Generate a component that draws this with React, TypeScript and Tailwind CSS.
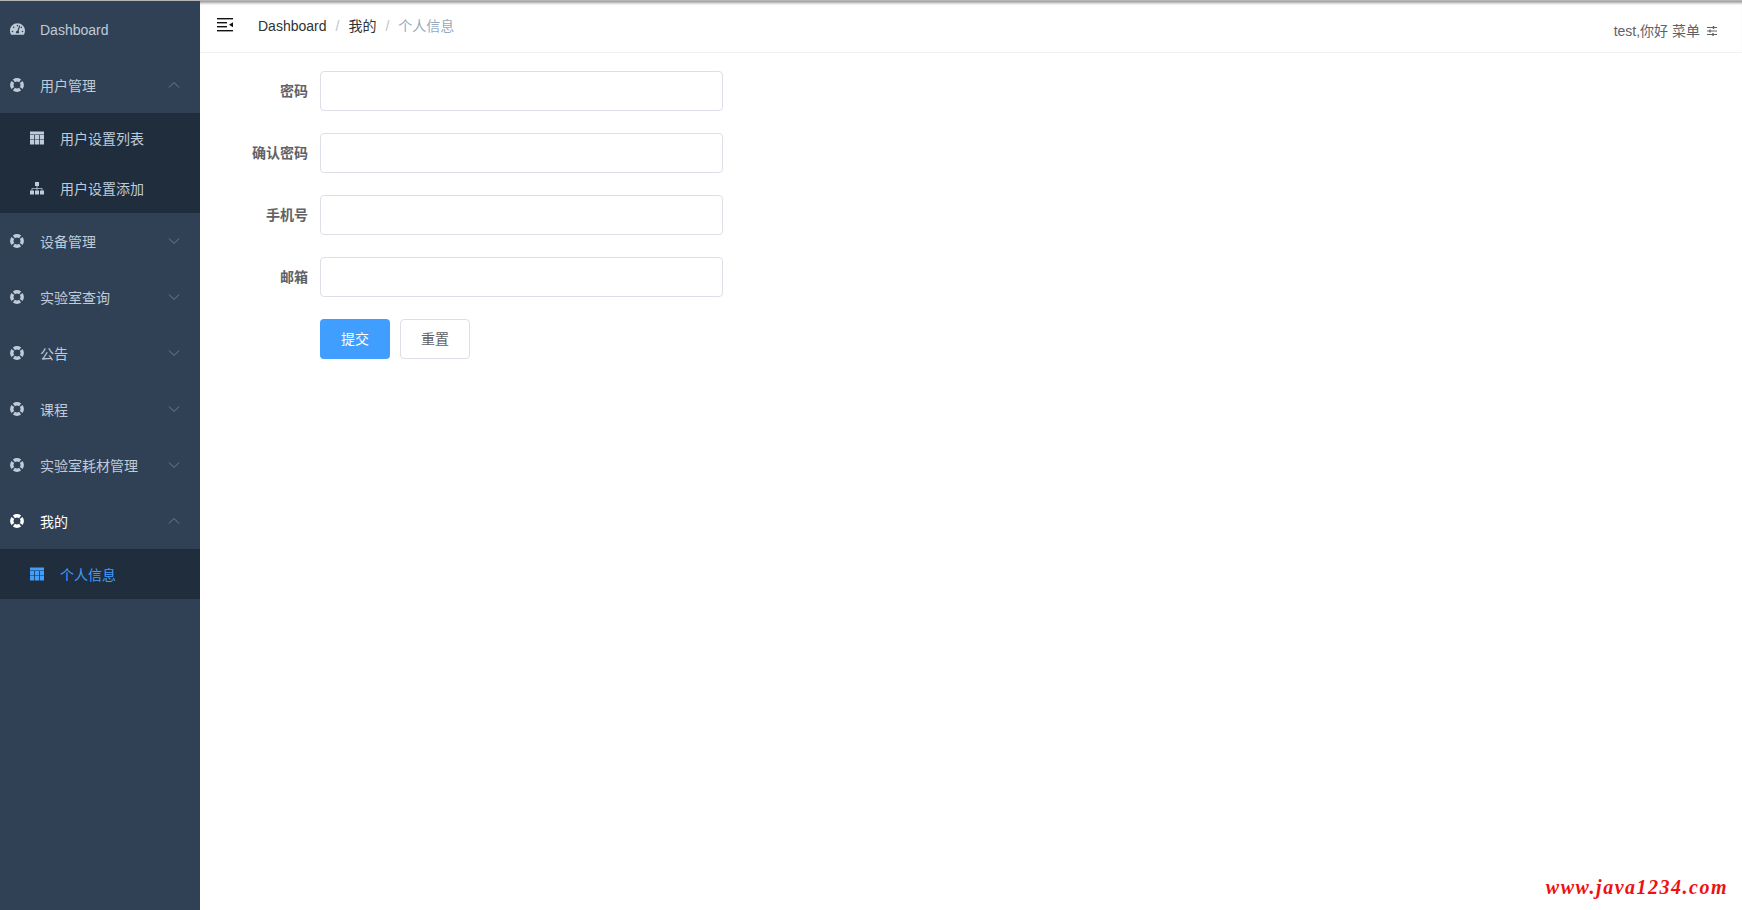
import { ReactNode } from "react";
import { FaTachometerAlt } from "react-icons/fa";

const fontStack = "font-['Liberation_Sans','Noto_Sans_CJK_SC',sans-serif]";

function Chevron({ up }: { up?: boolean }) {
  return (
    <svg className="h-3 w-3 text-[#6f7f92]" viewBox="0 0 12 12" fill="none" stroke="currentColor" strokeWidth={1}>
      <path d={up ? "M1 8.5L6 3.5L11 8.5" : "M1 3.5L6 8.5L11 3.5"} />
    </svg>
  );
}

function RingIcon() {
  return (
    <svg className="h-3.5 w-3.5" viewBox="0 0 14 14" fill="none" stroke="currentColor">
      <circle cx="7" cy="7" r="5.2" strokeWidth="3.4" pathLength={100} strokeDasharray="20.5 4.5" strokeDashoffset="10.25" />
    </svg>
  );
}

function TableIcon() {
  return (
    <svg className="h-3.5 w-3.5" viewBox="0 0 14 14" fill="currentColor">
      <rect x="0" y="0.5" width="14" height="3" />
      <rect x="0" y="4" width="4.2" height="4.5" />
      <rect x="4.9" y="4" width="4.2" height="4.5" />
      <rect x="9.8" y="4" width="4.2" height="4.5" />
      <rect x="0" y="9" width="4.2" height="4.5" />
      <rect x="4.9" y="9" width="4.2" height="4.5" />
      <rect x="9.8" y="9" width="4.2" height="4.5" />
    </svg>
  );
}

function SitemapIcon() {
  return (
    <svg className="h-3.5 w-3.5" viewBox="0 0 14 14" fill="currentColor">
      <rect x="5" y="1" width="4" height="4" />
      <rect x="0" y="9.5" width="4" height="4" />
      <rect x="5" y="9.5" width="4" height="4" />
      <rect x="10" y="9.5" width="4" height="4" />
      <path d="M6.6 5h.8v2.2H12.4v2.3h-.8V8H7.4v1.5h-.8V8H2.4v1.5h-.8V7.2h5z" />
    </svg>
  );
}

function MenuRow({ label, up, active, icon }: { label: string; up?: boolean; active?: boolean; icon?: ReactNode }) {
  return (
    <div className={`flex h-14 items-center pl-2.5 pr-5 text-sm ${active ? "text-white" : "text-[#bfcbd9]"}`}>
      <span className="flex w-[30px] shrink-0 items-center">{icon ?? <RingIcon />}</span>
      <span className="flex-1 pt-0.5">{label}</span>
      {label !== "Dashboard" && <Chevron up={up} />}
    </div>
  );
}

function SubRow({ label, icon, active }: { label: string; icon: ReactNode; active?: boolean }) {
  return (
    <div className={`flex h-[50px] items-center pl-[30px] text-sm ${active ? "text-[#409eff]" : "text-[#bfcbd9]"}`}>
      <span className="flex w-[30px] shrink-0 items-center">{icon}</span>
      <span className="pt-px">{label}</span>
    </div>
  );
}

function Field({ label }: { label: string }) {
  return (
    <div className="mb-[22px] flex items-center">
      <label className="w-[88px] pr-3 text-right text-sm font-bold text-[#606266]">{label}</label>
      <input className="h-10 w-[403px] rounded border border-[#dcdfe6] bg-white px-[15px] outline-none" />
    </div>
  );
}

export default function App() {
  return (
    <div className={`flex h-screen w-full flex-col overflow-hidden bg-white ${fontStack}`}>
      <div className="h-px shrink-0 bg-[#b5b5b5]" />
      <div className="flex min-h-0 flex-1">
        {/* sidebar */}
        <aside className="w-[200px] shrink-0 bg-[#304156]">
          <MenuRow label="Dashboard" icon={<FaTachometerAlt className="h-3.5 w-[15px]" />} />
          <MenuRow label="用户管理" up />
          <div className="bg-[#1f2d3d]">
            <SubRow label="用户设置列表" icon={<TableIcon />} />
            <SubRow label="用户设置添加" icon={<SitemapIcon />} />
          </div>
          <MenuRow label="设备管理" />
          <MenuRow label="实验室查询" />
          <MenuRow label="公告" />
          <MenuRow label="课程" />
          <MenuRow label="实验室耗材管理" />
          <MenuRow label="我的" up active />
          <div className="bg-[#1f2d3d]">
            <SubRow label="个人信息" icon={<TableIcon />} active />
          </div>
        </aside>

        <main className="relative min-w-0 flex-1">
          {/* navbar */}
          <div className="mb-[-1px] flex h-[52px] items-center justify-between border-b border-[#f2f2f2] pl-[17px] pr-6 shadow-[inset_0_4px_3px_-2px_rgba(0,0,0,0.4)]">
            <div className="flex items-center pb-0.5">
              <svg className="mb-0.5 h-4 w-4 text-[#111]" viewBox="0 0 16 16" fill="currentColor">
                <rect x="0" y="1" width="16" height="1.4" />
                <rect x="0" y="5" width="10" height="1.4" />
                <rect x="0" y="9" width="10" height="1.4" />
                <rect x="0" y="13" width="16" height="1.4" />
                <path d="M12 7.7L16 5.2V10.2Z" />
              </svg>
              <div className="ml-[25px] flex items-center text-sm">
                <span className="text-[#303133]">Dashboard</span>
                <span className="mx-[9px] text-[#c0c4cc]">/</span>
                <span className="text-[#303133]">我的</span>
                <span className="mx-[9px] text-[#c0c4cc]">/</span>
                <span className="text-[#97a8be]">个人信息</span>
              </div>
            </div>
            <div className="flex items-center gap-1.5 pt-2 text-sm text-[#606266]">
              <span>test,你好 菜单</span>
              <svg className="h-3 w-3" viewBox="0 0 12 12" fill="none" stroke="currentColor" strokeWidth={1}>
                <path d="M1 2.5H11M1 6H11M1 9.5H11" />
                <path d="M7.5 1V4M4 4.5V7.5M7 8V11" strokeWidth={1.4} />
              </svg>
            </div>
          </div>

          {/* form */}
          <form className="pl-8 pt-[19px]">
            <Field label="密码" />
            <Field label="确认密码" />
            <Field label="手机号" />
            <Field label="邮箱" />
            <div className="flex gap-2.5 pl-[88px]">
              <button type="button" className="h-10 w-[70px] rounded bg-[#409eff] text-sm text-white">提交</button>
              <button type="button" className="h-10 w-[70px] rounded border border-[#dcdfe6] bg-white text-sm text-[#606266]">重置</button>
            </div>
          </form>

          {/* site watermark */}
          <div className="absolute bottom-[13px] right-[14px] font-['Liberation_Serif',serif] text-xl font-bold italic leading-5 tracking-[1.5px] text-[#ee1111]">
            www.java1234.com
          </div>
        </main>
      </div>
    </div>
  );
}
